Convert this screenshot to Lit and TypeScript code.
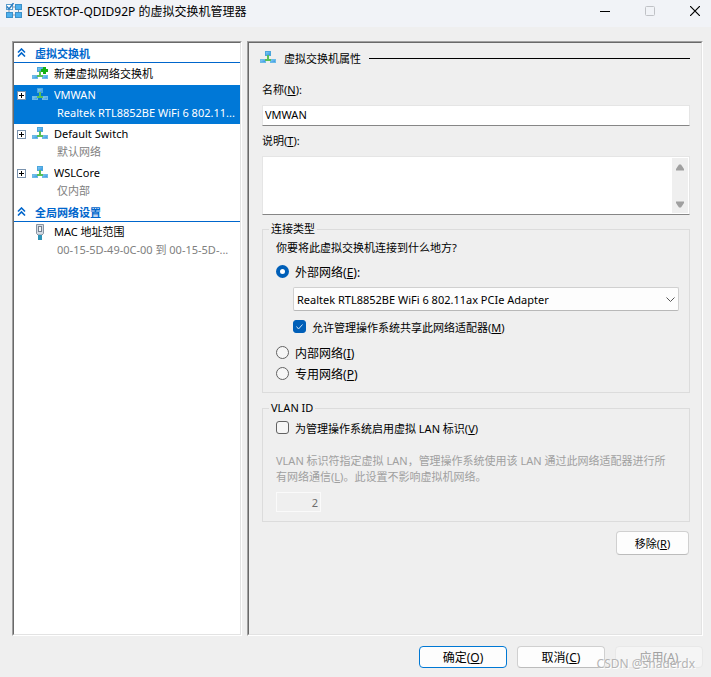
import { LitElement, html, css, svg, nothing } from "lit";
import { customElement, property, state } from "lit/decorators.js";
import { classMap } from "lit/directives/class-map.js";

const switchIcon = (plus = false) => html`
  <svg width="16" height="14" viewBox="0 0 16 14" aria-hidden="true">
    <defs>
      <linearGradient id="blue" x1="0" y1="0" x2="1" y2="1">
        <stop offset="0" stop-color="#8fd3f7" />
        <stop offset="1" stop-color="#2a8ee0" />
      </linearGradient>
    </defs>
    <rect x="5.500" y="0.500" width="5" height="4" fill="url(#blue)" stroke="#4ba6dc" />
    <rect x="0.500" y="8.500" width="5" height="3" fill="url(#blue)" stroke="#6cbae6" />
    <rect x="10.500" y="8.500" width="5" height="3" fill="url(#blue)" stroke="#6cbae6" />
    <path d="M7 4h2v4h2v2h-6v-2h2z" fill="#58c058" />
    ${plus ? svg`<path d="M11 0h3v2h2v3h-2v2h-3v-2h-2v-3h2z" fill="#14b014" />` : nothing}
  </svg>
`;

const cableIcon = html`
  <svg width="16" height="16" viewBox="0 0 16 16" aria-hidden="true">
    <path d="M4.500 0.500h7v9l-1.500 1.500h-4l-1.500-1.500z" fill="#d3dae2" stroke="#8794a3" />
    <rect x="6.500" y="2.500" width="3" height="5" fill="#f2f5f8" stroke="#75808e" />
    <rect x="6" y="11" width="4" height="5" fill="#2e94b8" />
  </svg>
`;

const managerIcon = html`
  <svg width="18" height="16" viewBox="0 0 18 16" aria-hidden="true">
    <path d="M5 4h8M5 12h8M4 5v7M13.500 5v7" stroke="#8a97a5" fill="none" />
    <rect x="1.500" y="1.500" width="6" height="5" fill="#fff" stroke="#5a9ccc" />
    <path d="M2 3.500l2 2.500 4.500-6" stroke="#2e7fc2" stroke-width="1.500" fill="none" />
    <rect x="10.500" y="1.500" width="6" height="5" fill="#4db0ee" stroke="#3c90c8" />
    <rect x="1.500" y="9.500" width="6" height="5" fill="#4db0ee" stroke="#3c90c8" />
    <rect x="10.500" y="9.500" width="6" height="5" fill="#4db0ee" stroke="#3c90c8" />
  </svg>
`;

const base = css`
  * {
    box-sizing: border-box;
  }
  svg {
    display: block;
    flex: none;
  }
  button {
    font: inherit;
    color: inherit;
    margin: 0;
    padding: 0;
  }
  u {
    text-underline-offset: 1px;
  }
`;

interface Node {
  id: string;
  title: string;
  detail?: string;
  icon: "new" | "switch" | "cable";
  expandable?: boolean;
}

const sections: { title: string; nodes: Node[] }[] = [
  {
    title: "虚拟交换机",
    nodes: [
      { id: "new", title: "新建虚拟网络交换机", icon: "new" },
      { id: "vmwan", title: "VMWAN", detail: "Realtek RTL8852BE WiFi 6 802.11...", icon: "switch", expandable: true },
      { id: "default", title: "Default Switch", detail: "默认网络", icon: "switch", expandable: true },
      { id: "wsl", title: "WSLCore", detail: "仅内部", icon: "switch", expandable: true },
    ],
  },
  {
    title: "全局网络设置",
    nodes: [{ id: "mac", title: "MAC 地址范围", detail: "00-15-5D-49-0C-00 到 00-15-5D-...", icon: "cable" }],
  },
];

@customElement("switch-tree")
export class SwitchTree extends LitElement {
  @state() private selected = "vmwan";

  static styles = [
    base,
    css`
      :host {
        display: block;
        background: #fff;
      }
      .heading {
        display: flex;
        align-items: center;
        gap: 9px;
        width: 100%;
        height: 20px;
        padding-left: 3px;
        border: 0;
        border-bottom: 1px solid #0066cc;
        background: none;
        color: #0066cc;
        font-weight: 600;
      }
      .row {
        display: grid;
        grid-template-columns: 9px 16px minmax(0, 1fr);
        column-gap: 6px;
        align-items: center;
        padding: 0 2px 0 3px;
      }
      .row.short {
        height: 22px;
      }
      .title,
      .detail {
        border: 0;
        background: none;
        text-align: left;
        white-space: nowrap;
        overflow: hidden;
        text-overflow: ellipsis;
      }
      .title {
        line-height: 20px;
      }
      .detail {
        grid-column: 3;
        padding-left: 3px;
        line-height: 16px;
        height: 19px;
        color: #808080;
      }
      .selected,
      .selected .detail {
        color: #fff;
      }
      .selected {
        background: #0078d7;
      }
      .expand {
        width: 9px;
        height: 9px;
        border: 1px solid #7a92ad;
        background: #fff;
        color: #000;
      }
    `,
  ];

  private icon(kind: Node["icon"]) {
    return kind === "cable" ? cableIcon : switchIcon(kind === "new");
  }

  render() {
    return sections.map(
      (section) => html`
        <button class="heading">
          <svg width="9" height="9" viewBox="0 0 9 9" aria-hidden="true">
            <path d="M1 4.500l3.500-3.500 3.500 3.500M1 8.500l3.500-3.500 3.500 3.500" fill="none" stroke="#0066cc" stroke-width="1.600" />
          </svg>
          ${section.title}
        </button>
        ${section.nodes.map(
          (n) => html`
            <div class=${classMap({ row: true, short: !n.detail, selected: n.id === this.selected })} @click=${() => (this.selected = n.id)}>
              ${n.expandable
                ? html`<button class="expand" aria-label="展开 ${n.title}">
                    <svg width="7" height="7" viewBox="0 0 7 7"><path d="M1 3.500h5M3.500 1v5" stroke="currentColor" /></svg>
                  </button>`
                : html`<span></span>`}
              ${this.icon(n.icon)}
              <button class="title">${n.title}</button>
              ${n.detail ? html`<div class="detail">${n.detail}</div>` : nothing}
            </div>
          `
        )}
      `
    );
  }
}

@customElement("switch-properties")
export class SwitchProperties extends LitElement {
  @property() name = "VMWAN";
  @state() private kind = "external";

  static styles = [
    base,
    css`
      :host {
        display: flex;
        flex-direction: column;
        padding: 7px 11px 8px 13px;
      }
      .banner {
        display: flex;
        align-items: center;
        gap: 8px;
        height: 16px;
        margin: 0 0 16px -2px;
        font: inherit;
      }
      .rule {
        flex: 1;
        height: 1px;
        background: #000;
      }
      .label {
        line-height: 16px;
      }
      .field,
      .area {
        border: 1px solid #e5e5e5;
        border-bottom-color: #868686;
        background: #fff;
      }
      .field {
        width: 100%;
        height: 21px;
        margin: 7px 0;
        padding: 0 2px 2px;
        font: inherit;
        color: #000;
      }
      .area {
        display: flex;
        height: 59px;
        margin: 7px 0 6px;
        padding: 1px 1px 1px 0;
      }
      .text {
        flex: 1;
        border: 0;
        padding: 2px;
        resize: none;
        overflow: hidden;
        font: inherit;
      }
      .scroll {
        display: flex;
        flex-direction: column;
        justify-content: space-between;
        align-items: center;
        width: 16px;
        padding: 6px 0 5px;
        background: #efefef;
      }
      fieldset {
        min-width: 0;
        margin: 0 0 7px;
        border: 1px solid #dcdcdc;
        padding: 1px 10px 8px 13px;
      }
      legend {
        margin-left: -7px;
        padding: 0 2px;
        line-height: 16px;
      }
      .question {
        margin: 1px 0 4px;
        line-height: 18px;
      }
      .choice {
        display: flex;
        align-items: center;
        gap: 6px;
        height: 21px;
      }
      .large {
        font-size: 12px;
      }
      .nested {
        padding-left: 17px;
      }
      .choice input {
        appearance: none;
        flex: none;
        width: 13px;
        height: 13px;
        margin: 0;
        border: 1px solid #626262;
        background: #f6f6f6;
      }
      .choice input[type="radio"] {
        border-radius: 50%;
      }
      .choice input[type="radio"]:checked {
        border: 4px solid #005fb8;
        background: #fff;
      }
      .choice input[type="checkbox"] {
        border-radius: 3px;
      }
      .box {
        display: grid;
      }
      .box > * {
        grid-area: 1 / 1;
      }
      .box svg {
        pointer-events: none;
      }
      .choice .box input:checked {
        border-color: #005fb8;
        background: #005fb8;
      }
      .picker {
        display: grid;
        align-items: center;
        margin: 5px 0 5px 17px;
      }
      .picker > * {
        grid-area: 1 / 1;
      }
      .picker svg {
        justify-self: end;
        margin: 2px 4px 0 0;
        pointer-events: none;
      }
      select {
        appearance: none;
        width: 100%;
        height: 24px;
        padding: 0 20px 0 3px;
        border: 1px solid #d0d0d0;
        border-bottom-color: #b8b8b8;
        border-radius: 2px;
        background: #fdfdfd;
        font: inherit;
        color: #000;
      }
      .gap {
        margin-top: 5px;
      }
      .note {
        margin: 15px 0 7px;
        padding-right: 4px;
        line-height: 16px;
        color: #a0a0a0;
      }
      .vlan {
        display: block;
        width: 45px;
        height: 20px;
        margin-bottom: 1px;
        border: 1px solid #fafafa;
        padding: 0 2px;
        background: #efefef;
        color: #6d6d6d;
        font: inherit;
        text-align: right;
      }
      .remove {
        align-self: flex-end;
        width: 73px;
        height: 24px;
        margin: 2px 1px 0 0;
        border: 1px solid #d0d0d0;
        border-bottom-color: #bcbcbc;
        border-radius: 4px;
        background: #fdfdfd;
      }
    `,
  ];

  private radio(id: string, text: string, key: string, tail = "") {
    return html`<label class="choice large">
      <input type="radio" name="kind" value=${id} .checked=${this.kind === id} @change=${() => (this.kind = id)} />
      <span>${text}(<u>${key}</u>)${tail}</span>
    </label>`;
  }

  render() {
    return html`
      <h2 class="banner">${switchIcon()}<span>虚拟交换机属性</span><span class="rule"></span></h2>
      <label class="label" for="name">名称(<u>N</u>):</label>
      <input class="field" id="name" .value=${this.name} />
      <label class="label" for="notes">说明(<u>T</u>):</label>
      <div class="area">
        <textarea class="text" id="notes"></textarea>
        <div class="scroll" aria-hidden="true">
          <svg width="10" height="7" viewBox="0 0 10 7"><path d="M4 0.500h2l3 4.500v1.500h-8v-1.500z" fill="#a0a0a0" /></svg>
          <svg width="10" height="7" viewBox="0 0 10 7"><path d="M4 6.500h2l3-4.500v-1.500h-8v1.500z" fill="#a0a0a0" /></svg>
        </div>
      </div>
      <fieldset>
        <legend>连接类型</legend>
        <p class="question">你要将此虚拟交换机连接到什么地方?</p>
        ${this.radio("external", "外部网络", "E", ":")}
        <div class="picker">
          <select aria-label="外部网络适配器">
            <option>Realtek RTL8852BE WiFi 6 802.11ax PCIe Adapter</option>
          </select>
          <svg width="9" height="6" viewBox="0 0 9 6" aria-hidden="true"><path d="M0.500 0.500l4 4 4-4" fill="none" stroke="#555" /></svg>
        </div>
        <label class="choice nested">
          <span class="box">
            <input type="checkbox" checked />
            <svg width="13" height="13" viewBox="0 0 13 13"><path d="M3.500 6.500l2 2.500 4-4.500" fill="none" stroke="#cfe4f7" /></svg>
          </span>
          <span>允许管理操作系统共享此网络适配器(<u>M</u>)</span>
        </label>
        <div class="gap">${this.radio("internal", "内部网络", "I")} ${this.radio("private", "专用网络", "P")}</div>
      </fieldset>
      <fieldset>
        <legend>VLAN ID</legend>
        <label class="choice"><input type="checkbox" /><span>为管理操作系统启用虚拟 LAN 标识(<u>V</u>)</span></label>
        <p class="note">VLAN 标识符指定虚拟 LAN，管理操作系统使用该 LAN 通过此网络适配器进行所有网络通信(<u>L</u>)。此设置不影响虚拟机网络。</p>
        <input class="vlan" aria-label="VLAN ID" value="2" disabled />
      </fieldset>
      <button class="remove">移除(<u>R</u>)</button>
    `;
  }
}

@customElement("app-root")
export class AppRoot extends LitElement {
  static styles = [
    base,
    css`
      :host {
        position: relative;
        display: flex;
        flex-direction: column;
        min-height: 100vh;
        background: #efefef;
        color: #000;
        font: 11px "Noto Sans", "Noto Sans CJK SC", sans-serif;
      }
      .titlebar {
        display: flex;
        align-items: center;
        gap: 4px;
        height: 27px;
        padding: 0 4px 5px 5px;
        background: #f1f3f7;
        font-size: 12px;
      }
      h1 {
        flex: 1;
        margin: 0;
        font: inherit;
      }
      .caption {
        display: grid;
        place-items: center;
        width: 24px;
        height: 22px;
        margin-left: 17px;
        border: 0;
        background: none;
      }
      .panes {
        flex: 1;
        display: grid;
        grid-template-columns: 230px minmax(0, 1fr);
        gap: 5px;
        padding: 14px 8px 10px 12px;
      }
      .pane {
        border: 1px solid;
        border-color: #a0a0a0 #fff #fff #a0a0a0;
      }
      .pane > * {
        height: 100%;
        border: 1px solid;
        border-color: #696969 #e3e3e3 #e3e3e3 #696969;
      }
      .actions {
        display: flex;
        justify-content: flex-end;
        gap: 10px;
        padding: 0 8px 9px;
      }
      .action {
        width: 88px;
        height: 22px;
        border: 1px solid #d0d0d0;
        border-bottom-color: #bcbcbc;
        border-radius: 4px;
        background: #fdfdfd;
        font-size: 12px;
      }
      .primary {
        border-color: #0078d4;
      }
      .action:disabled {
        border-color: #e8e8e8;
        background: #f5f5f5;
        color: #a0a0a0;
      }
      .watermark {
        position: absolute;
        right: 16px;
        bottom: 5px;
        font-size: 12px;
        line-height: 16px;
        color: #b4b4b4;
        text-shadow: 1px 1px 0 #fff;
        pointer-events: none;
      }
    `,
  ];

  render() {
    return html`
      <header class="titlebar">
        ${managerIcon}
        <h1>DESKTOP-QDID92P 的虚拟交换机管理器</h1>
        <button class="caption" aria-label="最小化">
          <svg width="10" height="10" viewBox="0 0 10 10"><path d="M0 5.500h10" stroke="#000" /></svg>
        </button>
        <button class="caption" aria-label="最大化" disabled>
          <svg width="10" height="10" viewBox="0 0 10 10"><rect x="0.500" y="0.500" width="9" height="9" rx="1" fill="none" stroke="#c0c2c6" /></svg>
        </button>
        <button class="caption" aria-label="关闭">
          <svg width="10" height="10" viewBox="0 0 10 10"><path d="M0 0l10 10M10 0l-10 10" stroke="#000" stroke-width="1.200" /></svg>
        </button>
      </header>
      <main class="panes">
        <div class="pane"><switch-tree></switch-tree></div>
        <div class="pane"><switch-properties></switch-properties></div>
      </main>
      <footer class="actions">
        <button class="action primary">确定(<u>O</u>)</button>
        <button class="action">取消(<u>C</u>)</button>
        <button class="action" disabled>应用(<u>A</u>)</button>
      </footer>
      <div class="watermark">CSDN @shaderdx</div>
    `;
  }
}
